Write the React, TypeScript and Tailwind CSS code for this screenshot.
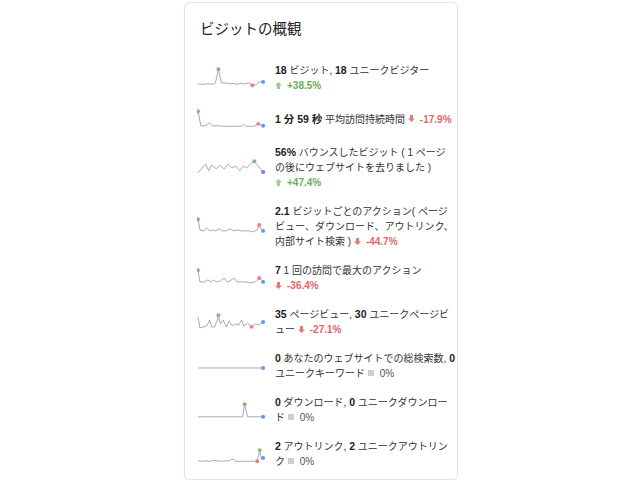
import React from "react";

type Pt = [number, number];

function Spark({ pts, hi, lo, last = true }: { pts: Pt[]; hi?: number; lo?: number; last?: boolean }) {
  const d = pts.map((p) => p.join(",")).join(" ");
  const end = pts[pts.length - 1];
  return (
    <svg width="72" height="24" viewBox="0 0 72 24" className="block">
      <polyline points={d} fill="none" stroke="#a3a7b3" strokeWidth="1" strokeLinejoin="round" />
      {hi !== undefined && <circle cx={pts[hi][0]} cy={pts[hi][1]} r="2" fill="#7dbd6e" />}
      {lo !== undefined && <circle cx={pts[lo][0]} cy={pts[lo][1]} r="2" fill="#ef7f7f" />}
      {last && <circle cx={end[0]} cy={end[1]} r="2" fill="#5b95f5" />}
    </svg>
  );
}

function Up() {
  return (
    <svg width="7" height="7" viewBox="0 0 7 7" className="inline-block align-middle mr-[5px] mb-[2px]">
      <polygon points="3.5,0 7,3.5 5,3.5 5,7 2,7 2,3.5 0,3.5" fill="#9ccf8e" />
    </svg>
  );
}
function Down() {
  return (
    <svg width="7" height="7" viewBox="0 0 7 7" className="inline-block align-middle mr-[5px] mb-[2px]">
      <polygon points="3.5,7 7,3.5 5,3.5 5,0 2,0 2,3.5 0,3.5" fill="#e67878" />
    </svg>
  );
}
function Flat() {
  return <span className="inline-block w-[6px] h-[6px] bg-[#cfcfcf] align-middle mr-[6px] mb-[2px]" />;
}

function Pos({ v }: { v: string }) {
  return (
    <span className="whitespace-nowrap">
      <Up />
      <span className="font-bold text-[#6aae5c]">{v}</span>
    </span>
  );
}
function Neg({ v }: { v: string }) {
  return (
    <span className="whitespace-nowrap">
      <Down />
      <span className="font-bold text-[#e46565]">{v}</span>
    </span>
  );
}
function Zero() {
  return (
    <span className="whitespace-nowrap">
      <Flat />
      <span className="text-[#555]">0%</span>
    </span>
  );
}

function Row({ spark, children }: { spark: React.ReactNode; children: React.ReactNode }) {
  return (
    <div className="flex items-center">
      <div className="w-[70px] h-[24px] shrink-0 flex items-center">{spark}</div>
      <div className="ml-[8px] text-[10px] leading-[15px] text-[#333] whitespace-nowrap">{children}</div>
    </div>
  );
}

const B = ({ children }: { children: React.ReactNode }) => <span className="font-bold text-[#222] text-[10.5px]">{children}</span>;

export default function App() {
  const s1: Pt[] = [[1, 18], [6, 18.5], [11, 18], [16, 18.5], [19, 17], [22, 3], [25, 17], [29, 17], [33, 18], [37, 17.5], [41, 18.5], [45, 17.5], [49, 18], [53, 17], [57, 19.5], [61, 19], [64, 16], [68, 16]];
  const s2: Pt[] = [[1, 4], [4, 19], [9, 19], [13, 16], [16, 19], [22, 19], [28, 19.5], [34, 19.5], [40, 19.5], [46, 19.5], [48, 17.5], [50, 19.5], [56, 19.5], [59, 19.5], [63, 17], [68, 19]];
  const s3: Pt[] = [[1, 17], [6, 11], [9, 8], [12, 15], [15, 9], [20, 13], [24, 9], [28, 13], [32, 8], [36, 12], [40, 10], [44, 15], [48, 10], [51, 12], [55, 8], [59, 5], [63, 10], [68, 16]];
  const s4: Pt[] = [[1, 4], [3, 15], [7, 16], [10, 13], [13, 16], [16, 15], [19, 16], [23, 14], [26, 16], [30, 16], [34, 14], [38, 16], [42, 15], [46, 16], [50, 16], [54, 16], [58, 17], [62, 15], [64, 10], [66, 14], [68, 16]];
  const s5: Pt[] = [[1, 4], [3, 16], [7, 16], [11, 14], [14, 16], [17, 14], [20, 16], [24, 15], [28, 12], [31, 16], [34, 15], [38, 12], [41, 16], [45, 16], [49, 16], [53, 16.5], [57, 17], [61, 15], [64, 12], [66, 14], [68, 16]];
  const s6: Pt[] = [[1, 7], [3, 18], [7, 17], [10, 16], [13, 10], [15, 17], [18, 17], [21, 10], [22, 5], [24, 14], [27, 10], [30, 17], [33, 11], [36, 16], [40, 14], [43, 15], [46, 10], [48, 16], [52, 13], [56, 17], [60, 14], [64, 15], [68, 12]];
  const s7: Pt[] = [[1, 14], [68, 14]];
  const s8: Pt[] = [[1, 19], [44, 19], [47, 19], [49, 6], [52, 19], [68, 19]];
  const s9: Pt[] = [[1, 19], [5, 19.5], [9, 19], [13, 19.5], [17, 18.5], [21, 19], [25, 19.5], [29, 19], [33, 19], [37, 17], [39, 19.5], [43, 19.5], [47, 19.5], [51, 19.5], [55, 19.5], [58, 19.5], [62, 19.5], [64.5, 8], [66.5, 18], [68, 16]];

  return (
    <div className="w-[640px] h-[480px] bg-white overflow-hidden" style={{ fontFamily: '"Liberation Sans", "Noto Sans CJK JP", sans-serif' }}>
      <div className="ml-[184px] mt-[2px] w-[274px] border border-[#e3e3e3] rounded-[6px] bg-white pl-[12px] pr-[4px] pt-[15px] pb-[10px] shadow-[0_1px_2px_rgba(0,0,0,0.06)]">
        <div className="pl-[3px] text-[14.5px] leading-[22px] text-[#222]">ビジットの概観</div>
        <div className="mt-[23px] flex flex-col gap-[14px]">
          <Row spark={<Spark pts={s1} hi={5} lo={14} />}>
            <B>18</B> ビジット, <B>18</B> ユニークビジター<br />
            <Pos v="+38.5%" />
          </Row>
          <Row spark={<Spark pts={s2} hi={0} lo={14} />}>
            <B>1 分 59 秒</B> 平均訪問持続時間 <Neg v="-17.9%" />
          </Row>
          <Row spark={<Spark pts={s3} hi={15} lo={17} />}>
            <B>56%</B> バウンスしたビジット ( 1 ページ<br />
            の後にウェブサイトを去りました )<br />
            <Pos v="+47.4%" />
          </Row>
          <Row spark={<Spark pts={s4} hi={0} lo={18} />}>
            <B>2.1</B> ビジットごとのアクション( ページ<br />
            ビュー、ダウンロード、アウトリンク、<br />
            内部サイト検索 ) <Neg v="-44.7%" />
          </Row>
          <Row spark={<Spark pts={s5} hi={0} lo={18} />}>
            <B>7</B> 1 回の訪問で最大のアクション<br />
            <Neg v="-36.4%" />
          </Row>
          <Row spark={<Spark pts={s6} hi={8} lo={19} />}>
            <B>35</B> ページビュー, <B>30</B> ユニークページビ<br />
            ュー <Neg v="-27.1%" />
          </Row>
          <Row spark={<Spark pts={s7} />}>
            <B>0</B> あなたのウェブサイトでの総検索数, <B>0</B><br />
            ユニークキーワード <Zero />
          </Row>
          <Row spark={<Spark pts={s8} hi={3} />}>
            <B>0</B> ダウンロード, <B>0</B> ユニークダウンロー<br />
            ド <Zero />
          </Row>
          <Row spark={<Spark pts={s9} hi={17} lo={16} />}>
            <B>2</B> アウトリンク, <B>2</B> ユニークアウトリン<br />
            ク <Zero />
          </Row>
        </div>
      </div>
    </div>
  );
}
